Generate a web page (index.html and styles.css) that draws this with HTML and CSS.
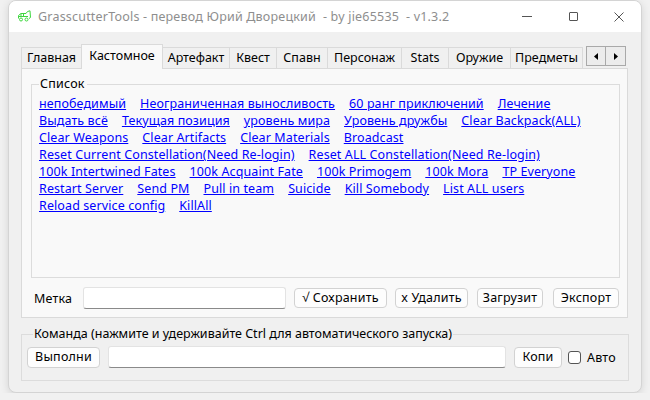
FILE: index.html
```html
<!DOCTYPE html>
<html lang="ru">
<head>
<meta charset="utf-8">
<title>GrasscutterTools</title>
<link rel="stylesheet" href="styles.css">
</head>
<body>
<div class="window">
  <div class="titlebar">
    <svg class="app-icon" width="15" height="12" viewBox="0 0 15 12">
      <path d="M1.5 8.5 V5.5 L4 3.5 H9 L10.5 1.5 L13 0.8 L13.5 7.5 L12 8.5 M4 3.5 V6.5 M6.5 3.5 V6.5 M1.5 6.5 H11" fill="none" stroke="#3ed63e" stroke-width="1"/>
      <circle cx="4" cy="9.5" r="1.5" fill="none" stroke="#3ed63e" stroke-width="1"/>
      <circle cx="9.5" cy="9.5" r="1.5" fill="none" stroke="#3ed63e" stroke-width="1"/>
    </svg>
    <span class="title">GrasscutterTools - перевод Юрий Дворецкий  - by jie65535  - v1.3.2</span>
    <div class="controls">
      <span class="ctl min"></span>
      <span class="ctl max"></span>
      <svg class="ctl close" width="10" height="10" viewBox="0 0 10 10"><path d="M0.5 0.5 L9.5 9.5 M9.5 0.5 L0.5 9.5" stroke="#555" stroke-width="1"/></svg>
    </div>
  </div>
  <div class="client">
    <div class="tabs">
      <div class="tab w-main">Главная</div>
      <div class="tab active w-custom">Кастомное</div>
      <div class="tab w-art">Артефакт</div>
      <div class="tab w-quest">Квест</div>
      <div class="tab w-spawn">Спавн</div>
      <div class="tab w-char">Персонаж</div>
      <div class="tab w-stats">Stats</div>
      <div class="tab w-weap">Оружие</div>
      <div class="tab w-items">Предметы</div>
      <div class="scroller">
        <span class="arrow"><svg width="4" height="7" viewBox="0 0 4 7"><path d="M4 0 L0 3.5 L4 7 Z" fill="#000"/></svg></span>
        <span class="arrow"><svg width="4" height="7" viewBox="0 0 4 7"><path d="M0 0 L4 3.5 L0 7 Z" fill="#000"/></svg></span>
      </div>
    </div>
    <div class="panel">
      <fieldset class="group list-group">
        <legend>Список</legend>
        <div class="links">
          <div class="link-row"><a href="#">непобедимый</a><a href="#">Неограниченная выносливость</a><a href="#">60 ранг приключений</a><a href="#">Лечение</a></div>
          <div class="link-row"><a href="#">Выдать всё</a><a href="#">Текущая позиция</a><a href="#">уровень мира</a><a href="#">Уровень дружбы</a><a href="#">Clear Backpack(ALL)</a></div>
          <div class="link-row"><a href="#">Clear Weapons</a><a href="#">Clear Artifacts</a><a href="#">Clear Materials</a><a href="#">Broadcast</a></div>
          <div class="link-row"><a href="#">Reset Current Constellation(Need Re-login)</a><a href="#">Reset ALL Constellation(Need Re-login)</a></div>
          <div class="link-row"><a href="#">100k Intertwined Fates</a><a href="#">100k Acquaint Fate</a><a href="#">100k Primogem</a><a href="#">100k Mora</a><a href="#">TP Everyone</a></div>
          <div class="link-row"><a href="#">Restart Server</a><a href="#">Send PM</a><a href="#">Pull in team</a><a href="#">Suicide</a><a href="#">Kill Somebody</a><a href="#">List ALL users</a></div>
          <div class="link-row"><a href="#">Reload service config</a><a href="#">KillAll</a></div>
        </div>
      </fieldset>
      <div class="tag-row">
        <span class="label">Метка</span>
        <input class="textbox tag-input" type="text">
        <button class="btn b-save">√ Сохранить</button>
        <button class="btn b-del">x Удалить</button>
        <button class="btn b-load">Загрузит</button>
        <button class="btn b-exp">Экспорт</button>
      </div>
    </div>
    <fieldset class="group cmd-group">
      <legend>Команда (нажмите и удерживайте Ctrl для автоматического запуска)</legend>
      <div class="cmd-row">
        <button class="btn b-run">Выполни</button>
        <input class="textbox cmd-input" type="text">
        <button class="btn b-copy">Копи</button>
        <label class="auto"><span class="check"></span>Авто</label>
      </div>
    </fieldset>
  </div>
</div>
</body>
</html>
```

FILE: styles.css
```css
* { box-sizing: border-box; }
html, body {
  margin: 0;
  padding: 0;
  background: #f1f1f1;
  font-family: "Noto Sans", "Open Sans", sans-serif;
  font-size: 12.5px;
  letter-spacing: 0.2px;
  color: #000;
}
.window {
  margin-left: 8px;
  width: 634px;
  height: 393px;
  border: 1px solid #d4d4d4;
  border-radius: 8px;
  overflow: hidden;
  box-shadow: 0 2px 8px rgba(0,0,0,0.12);
  background: #f0f0f0;
  display: flex;
  flex-direction: column;
}
.titlebar {
  height: 31px;
  background: #fff;
  display: flex;
  align-items: center;
  padding-left: 8px;
}
.app-icon { margin-right: 6px; margin-top: -1px; }
.title {
  white-space: pre;
  color: #8e8e8e;
  margin-top: -1px;
}
.controls {
  margin-left: auto;
  display: flex;
  align-items: center;
  height: 100%;
}
.ctl { display: block; }
.min { width: 10px; height: 1px; background: #555; margin-right: 37px; }
.max { width: 9px; height: 9px; border: 1px solid #555; border-radius: 1px; margin-right: 36px; }
.close { margin-right: 17px; }

.client {
  flex: 1;
  padding: 12px 13px 0 12px;
}
.tabs {
  display: flex;
  align-items: flex-end;
  height: 24px;
  position: relative;
  z-index: 1;
}
.tab {
  height: 21px;
  border: 1px solid #dadada;
  border-bottom: none;
  background: #f0f0f0;
  text-align: center;
  line-height: 20px;
  white-space: nowrap;
  margin-right: -1px;
  letter-spacing: 0;
}
.tab.active {
  background: #f9f9f9;
  line-height: 21px;
  margin-bottom: -1px;
  height: 25px;
}
.w-main { width: 61px; }
.w-custom { width: 82px; }
.w-art { width: 68px; }
.w-quest { width: 48px; }
.w-spawn { width: 52px; }
.w-char { width: 75px; }
.w-stats { width: 48px; }
.w-weap { width: 63px; }
.w-items { width: 73px; }
.scroller {
  display: flex;
  margin-left: 4px;
  margin-bottom: 2px;
}
.arrow {
  width: 20px;
  height: 20px;
  border: 1px solid #a9a9a9;
  background: #ececec;
  display: flex;
  align-items: center;
  justify-content: center;
}
.arrow + .arrow { border-left: none; }

.panel {
  width: 607px;
  height: 250px;
  border: 1px solid #dadada;
  background: #f9f9f9;
  padding: 7px 0 0 9px;
}
.group {
  margin: 0;
  border: 1px solid #dcdcdc;
  padding: 0;
}
.group legend {
  padding: 0 2px 0 1px;
  line-height: 16px;
  white-space: nowrap;
}
.list-group {
  width: 589px;
  height: 202px;
  padding: 3px 0 0 7px;
}
.link-row {
  display: flex;
  column-gap: 14px;
  height: 17px;
  line-height: 17px;
  white-space: nowrap;
  letter-spacing: 0.1px;
}
.link-row a {
  color: #0000ff;
  text-decoration: underline;
}
.tag-row {
  display: flex;
  align-items: center;
  margin-top: 9px;
  height: 22px;
}
.label { margin-left: 3px; width: 49px; }
.textbox {
  height: 22px;
  border: 1px solid #e3e3e3;
  border-bottom: 1px solid #8a8a8a;
  border-radius: 3px;
  background: #fff;
  font: inherit;
  padding: 0 4px;
  outline: none;
}
.tag-input { width: 203px; margin-right: 8px; }
.btn {
  height: 20px;
  border: 1px solid #d2d2d2;
  border-radius: 4px;
  background: #fdfdfd;
  font: inherit;
  letter-spacing: 0.2px;
  color: #000;
  padding: 0;
  line-height: 18px;
  white-space: nowrap;
}
.b-save { width: 93px; margin-right: 8px; }
.b-del { width: 73px; margin-right: 9px; }
.b-load { width: 66px; margin-right: 10px; }
.b-exp { width: 66px; }

.cmd-group {
  width: 608px;
  margin-top: 8px;
  padding: 4px 0 0 5px;
  height: 55px;
}
.cmd-group legend { margin-left: 6px; padding: 0 1px; letter-spacing: 0; }
.cmd-row {
  display: flex;
  align-items: center;
  height: 22px;
}
.b-run { width: 73px; height: 21px; margin-right: 8px; }
.cmd-input { width: 398px; margin-right: 8px; }
.b-copy { width: 48px; height: 21px; margin-right: 6px; }
.auto { display: flex; align-items: center; }
.check {
  width: 13px;
  height: 13px;
  border: 1px solid #555;
  border-radius: 3px;
  background: #fff;
  margin-right: 6px;
}
```
